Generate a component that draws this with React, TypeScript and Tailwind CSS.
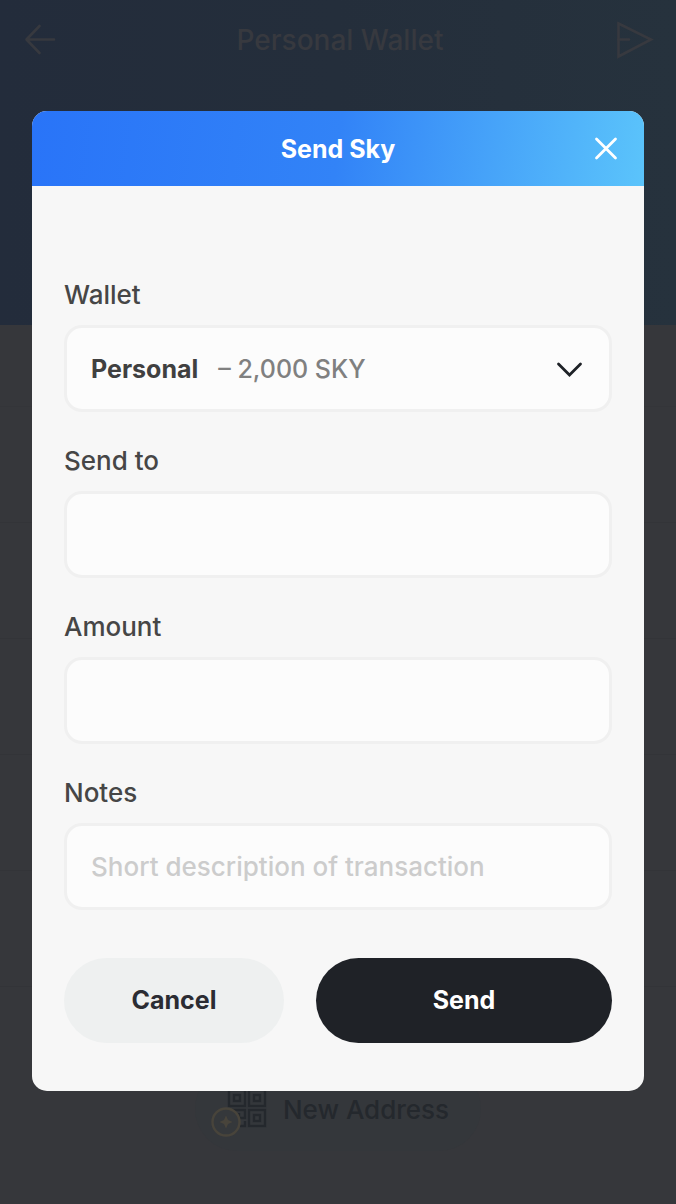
import { useState } from 'react';

const rows = ['r1', 'r2', 'r3', 'r4', 'r5'];

const boxClass =
  'h-[87px] w-full rounded-[18px] border-3 border-[#f0f0f0] bg-[#fcfcfc] px-6 text-[26px] font-medium text-[#464646] placeholder:text-[#cccccc] placeholder:opacity-100 outline-none';

const labelClass = 'text-[26px] leading-8 font-medium text-[#464646]';

function BackIcon() {
  return (
    <svg width="32" height="32" viewBox="0 0 32 32" fill="none" stroke="currentColor" strokeWidth="2.6" strokeLinecap="round" strokeLinejoin="round">
      <path d="M30 15.5H3M15.500 2L2.500 15.500l13 13.500" />
    </svg>
  );
}

function SendIcon() {
  return (
    <svg width="38" height="38" viewBox="0 0 38 38" fill="none" stroke="currentColor" strokeWidth="2.6">
      <path d="M2.500 2.500L35 18.500 2.500 35.500z" />
      <path d="M2.500 18.500H13" strokeLinecap="round" />
    </svg>
  );
}

function QrIcon() {
  return (
    <svg width="56" height="56" viewBox="0 0 56 56" fill="none">
      <g stroke="#24282d" strokeWidth="2.4">
        <rect x="18" y="9" width="16" height="16" />
        <rect x="38" y="9" width="16" height="16" />
        <rect x="38" y="29" width="16" height="16" />
        <rect x="23" y="14" width="6" height="6" />
        <rect x="43" y="14" width="6" height="6" />
        <rect x="43" y="34" width="6" height="6" />
        <path d="M18 29h16v8h-6v-5M34 40v5h-5" />
      </g>
      <circle cx="15" cy="41" r="13.5" fill="#35383b" stroke="#48443b" strokeWidth="2.4" />
      <path d="M15 34.500l2 4.500L21.500 41 17 43l-2 4.500L13 43l-4.500-2L13 39z" fill="#48443b" />
    </svg>
  );
}

function Backdrop() {
  return (
    <div className="min-h-screen bg-[#36373b]">
      <header className="flex h-[325px] items-start justify-between bg-linear-to-r from-[#232c3b] via-[#242e3b] to-[#26323d] px-6 pt-5 text-[#37393f]">
        <button type="button" aria-label="Back" className="flex h-10 w-10 items-center">
          <BackIcon />
        </button>
        <h1 className="text-[28px] leading-10 font-medium">Personal Wallet</h1>
        <button type="button" aria-label="Send" className="-mr-1 flex h-10 w-10 items-center">
          <SendIcon />
        </button>
      </header>
      <div className="h-[82px] border-b border-[#343539]" />
      {rows.map((row) => (
        <div key={row} className="h-[116px] border-b border-[#333438]" />
      ))}
      <div className="flex justify-center pt-20">
        <button
          type="button"
          className="flex h-[84px] items-center gap-4 rounded-full bg-[#34373b] pr-8 pl-4 text-[26px] font-medium text-[#24282d]"
        >
          <QrIcon />
          New Address
        </button>
      </div>
    </div>
  );
}

function TextField({ id, label, placeholder }: { id: string; label: string; placeholder?: string }) {
  return (
    <div className="flex flex-col gap-3.5">
      <label htmlFor={id} className={labelClass}>
        {label}
      </label>
      <input id={id} type="text" placeholder={placeholder} className={boxClass} />
    </div>
  );
}

export default function App() {
  const [wallet, setWallet] = useState('personal');
  return (
    <div className="relative font-['Inter','Liberation_Sans',sans-serif]">
      <Backdrop />
      <div className="absolute inset-x-8 top-[111px]">
        <section role="dialog" aria-labelledby="dialog-title" className="overflow-hidden rounded-[15px] bg-[#f7f7f7]">
          <div className="grid h-[75px] grid-cols-[1fr_auto_1fr] items-center bg-[linear-gradient(97deg,#2974f8_0%,#3283f7_50%,#5bc4fb_100%)] px-6 text-white">
            <span />
            <h2 id="dialog-title" className="text-[25px] leading-8 font-bold">
              Send Sky
            </h2>
            <button type="button" aria-label="Close" className="flex h-8 w-7 items-center justify-center justify-self-end">
              <svg width="24" height="24" viewBox="0 0 24 24" fill="none" stroke="currentColor" strokeWidth="2.8" strokeLinecap="round">
                <path d="M2.500 2l19 19M21.500 2l-19 19" />
              </svg>
            </button>
          </div>
          <form className="flex flex-col px-8 pt-[93px] pb-12" onSubmit={(e) => e.preventDefault()}>
            <div className="flex flex-col gap-[33px]">
              <div className="flex flex-col gap-3.5">
                <label htmlFor="wallet" className={labelClass}>
                  Wallet
                </label>
                <div className="relative flex h-[87px] items-center rounded-[18px] border-3 border-[#f0f0f0] bg-[#fcfcfc] px-6 text-[25px] leading-8">
                  <span className="font-bold text-[#404040]">Personal</span>
                  <span className="ml-5 font-medium text-[#808080]">– 2,000 SKY</span>
                  <svg className="ml-auto" width="30" height="20" viewBox="0 0 30 20" fill="none" stroke="#1e2227" strokeWidth="2.8" strokeLinecap="round">
                    <path d="M3.500 5L14.500 16 25.500 5" />
                  </svg>
                  <select
                    id="wallet"
                    value={wallet}
                    onChange={(e) => setWallet(e.target.value)}
                    className="absolute inset-0 h-full w-full cursor-pointer opacity-0"
                  >
                    <option value="personal">Personal – 2,000 SKY</option>
                  </select>
                </div>
              </div>
              <TextField id="send-to" label="Send to" />
              <TextField id="amount" label="Amount" />
              <TextField id="notes" label="Notes" placeholder="Short description of transaction" />
            </div>
            <div className="mt-12 grid grid-cols-[220fr_296fr] gap-8 text-[25px] font-bold">
              <button type="button" className="h-[85px] rounded-full bg-[#eef0f0] text-[#2b2c33]">
                Cancel
              </button>
              <button type="submit" className="h-[85px] rounded-full bg-[#1f2227] text-white">
                Send
              </button>
            </div>
          </form>
        </section>
      </div>
    </div>
  );
}
